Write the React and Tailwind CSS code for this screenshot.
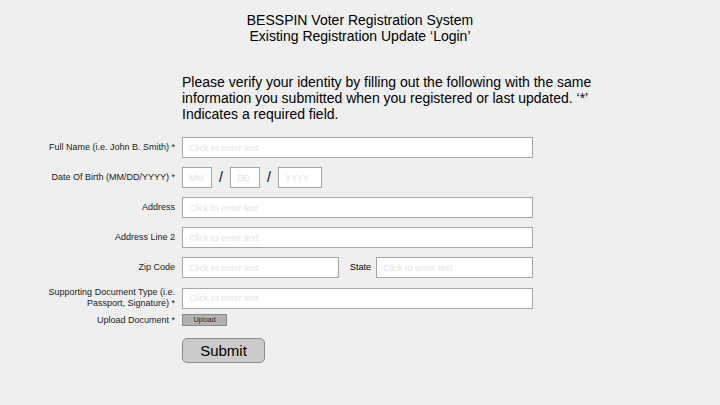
import React from 'react';

const font = { fontFamily: '"Liberation Sans", Arial, sans-serif' };

function Field({ w = 'w-[351px]', ph = 'Click to enter text' }) {
  return (
    <input
      type="text"
      placeholder={ph}
      className={`${w} h-[21px] border border-[#a6a6a6] bg-white px-[6px] text-[9px] placeholder:text-[#e4e4e4] outline-none`}
    />
  );
}

function Label({ children }) {
  return <div className="text-[9px] leading-[11px] text-[#222] text-right">{children}</div>;
}

export default function App() {
  return (
    <div style={font} className="w-[720px] h-[405px] bg-[#efefef] overflow-hidden text-black">
      <div className="pt-[12px] text-center text-[14px] leading-[16px]">
        <div>BESSPIN Voter Registration System</div>
        <div>Existing Registration Update ‘Login’</div>
      </div>

      <div className="mt-[30px] ml-[182px] w-[440px] text-[14px] leading-[16px]">
        Please verify your identity by filling out the following with the same information you submitted when you registered or last updated. ‘*’ Indicates a required field.
      </div>

      <div className="mt-[15px] grid grid-cols-[175px_auto] gap-x-[7px] gap-y-[9px] items-center leading-[11px]">
        <Label>Full Name (i.e. John B. Smith) *</Label>
        <Field />

        <Label>Date Of Birth (MM/DD/YYYY) *</Label>
        <div className="flex items-center">
          <Field w="w-[30px]" ph="MM" />
          <span className="w-[18px] text-center text-[14px]">/</span>
          <Field w="w-[30px]" ph="DD" />
          <span className="w-[18px] text-center text-[14px]">/</span>
          <Field w="w-[44px]" ph="YYYY" />
        </div>

        <Label>Address</Label>
        <Field />

        <Label>Address Line 2</Label>
        <Field />

        <Label>Zip Code</Label>
        <div className="flex items-center">
          <Field w="w-[157px]" />
          <span className="ml-[11px] w-[26px] text-[9px]">State</span>
          <Field w="w-[157px]" />
        </div>

        <Label>
          Supporting Document Type (i.e.
          <br />
          Passport, Signature) *
        </Label>
        <Field />

        <div className="-mt-[4px]"><Label>Upload Document *</Label></div>
        <div className="-mt-[4px] flex">
          <button className="block w-[45px] h-[12px] bg-[#b3b3b3] border border-[#8a8a8a] text-[7px] leading-[10px] text-[#222]">
            Upload
          </button>
        </div>

        <div />
        <div className="pt-[3px] flex">
          <button className="block w-[83px] h-[25px] rounded-[5px] bg-[#cbcbcb] border border-[#8c8c8c] text-[15px] leading-[17px]">
            Submit
          </button>
        </div>
      </div>
    </div>
  );
}
